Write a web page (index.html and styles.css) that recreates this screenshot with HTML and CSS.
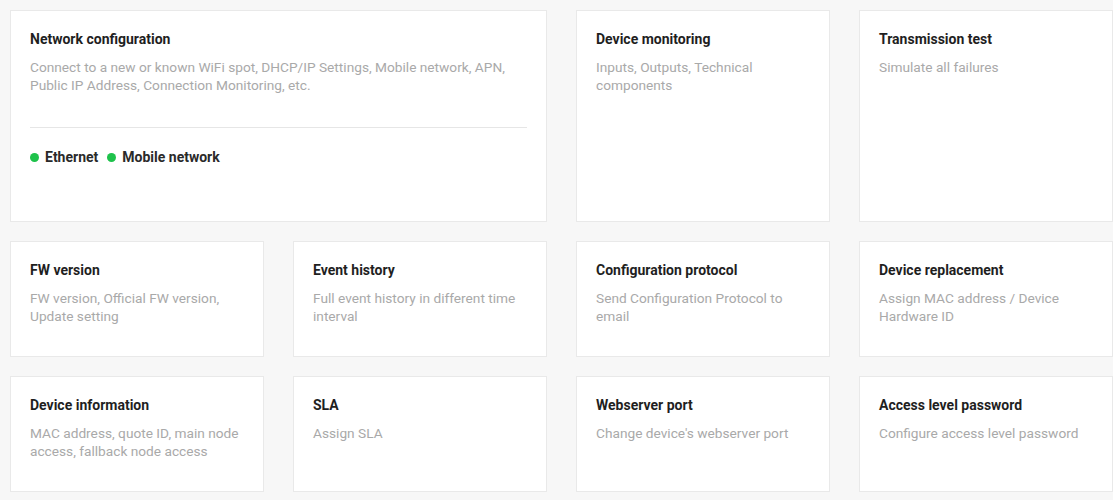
FILE: index.html
```html
<!DOCTYPE html>
<html lang="en">
<head>
<meta charset="utf-8">
<title>Device settings</title>
<link rel="stylesheet" href="styles.css">
</head>
<body>
<main class="grid">
  <section class="card card-wide">
    <h3 class="card-title">Network configuration</h3>
    <p class="card-desc">Connect to a new or known WiFi spot, DHCP/IP Settings, Mobile network, APN, Public IP Address, Connection Monitoring, etc.</p>
    <hr class="divider">
    <div class="status-row">
      <span class="status"><span class="dot"></span>Ethernet</span>
      <span class="status"><span class="dot"></span>Mobile network</span>
    </div>
  </section>
  <section class="card">
    <h3 class="card-title">Device monitoring</h3>
    <p class="card-desc">Inputs, Outputs, Technical components</p>
  </section>
  <section class="card">
    <h3 class="card-title">Transmission test</h3>
    <p class="card-desc">Simulate all failures</p>
  </section>

  <section class="card">
    <h3 class="card-title">FW version</h3>
    <p class="card-desc">FW version, Official FW version, Update setting</p>
  </section>
  <section class="card">
    <h3 class="card-title">Event history</h3>
    <p class="card-desc">Full event history in different time interval</p>
  </section>
  <section class="card">
    <h3 class="card-title">Configuration protocol</h3>
    <p class="card-desc">Send Configuration Protocol to email</p>
  </section>
  <section class="card">
    <h3 class="card-title">Device replacement</h3>
    <p class="card-desc">Assign MAC address / Device Hardware ID</p>
  </section>

  <section class="card">
    <h3 class="card-title">Device information</h3>
    <p class="card-desc">MAC address, quote ID, main node access, fallback node access</p>
  </section>
  <section class="card">
    <h3 class="card-title">SLA</h3>
    <p class="card-desc">Assign SLA</p>
  </section>
  <section class="card">
    <h3 class="card-title">Webserver port</h3>
    <p class="card-desc">Change device's webserver port</p>
  </section>
  <section class="card">
    <h3 class="card-title">Access level password</h3>
    <p class="card-desc">Configure access level password</p>
  </section>
</main>
</body>
</html>
```

FILE: styles.css
```css
html, body {
  margin: 0;
  padding: 0;
  background: #f7f7f7;
  font-family: Roboto, "Liberation Sans", Arial, sans-serif;
  -webkit-font-smoothing: antialiased;
}

.grid {
  display: grid;
  grid-template-columns: repeat(4, 254px);
  column-gap: 29px;
  row-gap: 19px;
  padding: 10px 0 0 10px;
}

.card {
  background: #fff;
  border: 1px solid #e9e9e9;
  padding: 19px 19px 31px;
  box-sizing: border-box;
  min-height: 116px;
}

.card-wide {
  grid-column: span 2;
  height: 212px;
}

.card-title {
  margin: 0;
  font-size: 14px;
  line-height: 18px;
  font-weight: 700;
  color: #1f1f1f;
}

.card-desc {
  margin: 10px 0 0;
  font-size: 13.7px;
  line-height: 18px;
  font-weight: 400;
  color: #a9a9a9;
}

.divider {
  border: 0;
  border-top: 1px solid #e6e6e6;
  margin: 33px 0 20px;
}

.status-row {
  display: flex;
  gap: 9px;
}

.status {
  display: flex;
  align-items: center;
  gap: 6px;
  font-size: 14px;
  line-height: 18px;
  font-weight: 700;
  color: #2a2a2a;
}

.dot {
  width: 9px;
  height: 9px;
  border-radius: 50%;
  background: #1ec24b;
}
```
